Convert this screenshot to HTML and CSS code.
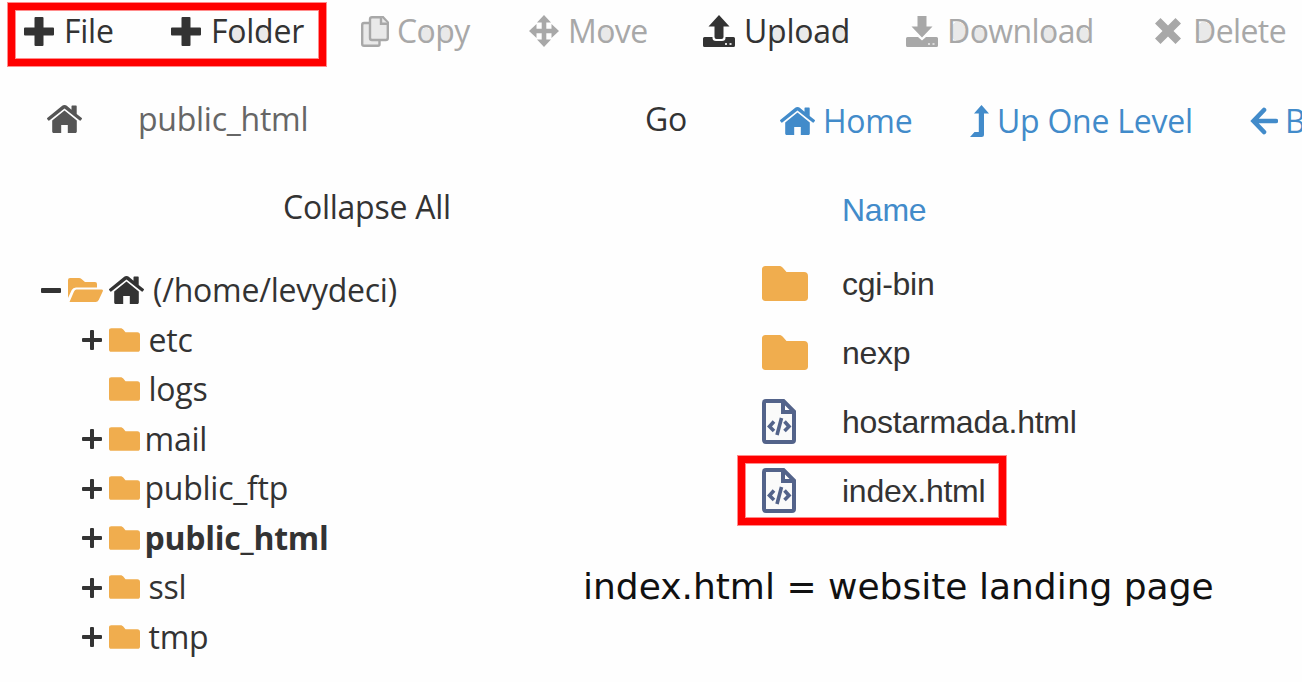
FILE: index.html
```html
<!DOCTYPE html>
<html lang="en">
<head>
<meta charset="utf-8">
<title>File Manager</title>
<link rel="stylesheet" href="styles.css">
</head>
<body>
<svg class="sprite" aria-hidden="true">
  <symbol id="house" viewBox="0 0 35 28"><path d="M17.500 0c1 0 1.700.3 2.300.8L24.500 4.700V1.200c0-.5.2-.7.7-.7H29c.5 0 .7.2.7.7v7.700l5.100 4.200c.3.3.3.6.1.9L33.600 15.500c-.3.3-.6.3-.9.1L17.500 3.500 2.300 15.600c-.3.2-.6.200-.9-.1L.1 14c-.2-.3-.2-.6.1-.9L15.200.8C15.800.3 16.500 0 17.500 0zM17.500 5.600 29.800 15.600v10.900c0 .9-.6 1.500-1.500 1.500h-7.500v-8h-6.600v8H6.700c-.9 0-1.500-.6-1.500-1.500V15.600z"/></symbol>
  <symbol id="folder" viewBox="0 0 46 35"><path d="M3.500 0H17c1.800 0 2.700.5 3.800 1.700L24.500 6H42c2.600 0 4 1.500 4 4v21.500c0 2.300-1.200 3.500-3.500 3.500h-39C1.200 35 0 33.800 0 31.500v-28C0 1.200 1.200 0 3.500 0z"/></symbol>
  <symbol id="htmlfile" viewBox="0 0 34 45"><path class="line" d="M4 2h17.500L32 12.500V41a2 2 0 0 1-2 2H4a2 2 0 0 1-2-2V4a2 2 0 0 1 2-2zM21 2v11h11"/><path class="code" d="M12 22.500 7.500 27.500 12 32M22.500 22.500 27 27.500 22.500 32M19.500 19 15 36"/></symbol>
  <symbol id="plus" viewBox="0 0 20 20"><path d="M8 1a1 1 0 0 1 1-1h2a1 1 0 0 1 1 1v7h7a1 1 0 0 1 1 1v2a1 1 0 0 1-1 1h-7v7a1 1 0 0 1-1 1H9a1 1 0 0 1-1-1v-7H1a1 1 0 0 1-1-1V9a1 1 0 0 1 1-1h7z"/></symbol>
  <symbol id="bigplus" viewBox="0 0 30 29"><path d="M10.500 1q0-1 1-1h7q1 0 1 1v9.500H29q1 0 1 1v6q0 1-1 1h-9.500V28q0 1-1 1h-7q-1 0-1-1v-9.500H1q-1 0-1-1v-6q0-1 1-1h9.500z"/></symbol>
</svg>

<nav class="toolbar">
  <div class="frame tools-frame">
    <span class="tool t-file"><svg class="i-plus"><use href="#bigplus"/></svg><span>File</span></span>
    <span class="tool"><svg class="i-plus"><use href="#bigplus"/></svg><span>F<i class="o">o</i>l<i class="d">d</i>er</span></span>
  </div>
  <span class="tool off t-copy"><svg class="i-copy" viewBox="0 0 28 31"><path class="sheet" d="M9.500 7H3Q1.200 7 1.200 9v19Q1.200 29.800 3 29.800h14q1.500 0 1.500-1.500V24"/><path class="sheet" d="M11 1.200h11l4.800 5.300v15.500q0 2-2 2H11q-2 0-2-2V3.200q0-2 2-2z"/><path class="sheet" d="M20 1.200v6.500H27"/></svg><span>C<i class="o">o</i><i class="p">p</i>y</span></span>
  <span class="tool off t-move"><svg class="i-move" viewBox="0 0 30 32"><path d="M15 0l7 7.500H17.300v6.200h5.200V9L30 16l-7.500 7V18.300h-5.200v6.200H22L15 32l-7-7.500h4.700v-6.200H7.500V23L0 16l7.500-7v4.700h5.200V7.500H8z"/></svg><span>M<i class="o">o</i>ve</span></span>
  <span class="tool t-upload"><svg class="i-load" viewBox="0 0 32 32"><path d="M16 0l10.500 11.500H20.500V22q0 2-2 2h-5q-2 0-2-2V11.500h-6zM1.500 22H9.500v1q0 3 3.500 3h6q3.500 0 3.500-3v-1h8Q32 22 32 23.500v7q0 1.500-1.500 1.500h-29Q0 32 0 30.500v-7Q0 22 1.500 22z"/><path class="dots" d="M22 28h2v2h-2zM26.500 28h2v2h-2z"/></svg><span>U<i class="p">p</i>l<i class="o">o</i><i class="a">a</i><i class="d">d</i></span></span>
  <span class="tool off t-download"><svg class="i-load" viewBox="0 0 32 32"><path d="M11.500 1h9v10.500h6L16 22.500 5.500 11.500h6zM1.500 22H12l4 3.500L20 22h10.500Q32 22 32 23.500v7q0 1.500-1.500 1.500h-29Q0 32 0 30.500v-7Q0 22 1.500 22z"/><path class="dots" d="M22 28h2v2h-2zM26.500 28h2v2h-2z"/></svg><span><i class="cap-d">D</i><i class="o">o</i>wnl<i class="o">o</i>a<i class="d">d</i></span></span>
  <span class="tool off t-delete"><svg class="i-x" viewBox="0 0 26 26"><path d="M5.500 0 13 7.500 20.500 0 26 5.500 18.500 13 26 20.500 20.500 26 13 18.500 5.500 26 0 20.500 7.500 13 0 5.500z"/></svg><span><i class="cap-d">D</i>elete</span></span>
</nav>

<div class="location">
  <svg class="i-house path-home"><use href="#house"/></svg>
  <span class="path">public_html</span>
  <span class="go">Go</span>
  <a class="link l-home"><svg class="i-house"><use href="#house"/></svg><span>Home</span></a>
  <a class="link l-up"><svg class="i-up" viewBox="0 0 19 32"><path d="M11.500 0 19 8.500H14V29.500q0 2.500-2.500 2.500H0l4.500-5H8.800V8.500H4z"/></svg><span>Up One Level</span></a>
  <a class="link l-back"><svg class="i-back" viewBox="0 0 28 28"><path d="M14 3 3.500 14 14 25M4 14h22"/></svg><span>Back</span></a>
</div>

<main class="main">
  <section class="side">
    <div class="collapse">Collapse All</div>
    <div class="tree">
      <div class="node root"><svg class="i-minus" viewBox="0 0 20 5"><rect width="20" height="5" rx="1"/></svg><svg class="i-open" viewBox="0 0 35 24"><path d="M0 20V2q0-2 2-2h9q1.500 0 2.500 1l3.500 3h10q2 0 2 2v3.500H8q-3 0-4.300 2.500zM8.500 11.500h25q2 0 1.200 2l-4 8.500q-1 2-3 2H1.500l4.500-10.500q1-2 2.500-2z"/></svg><svg class="i-house"><use href="#house"/></svg><span>(/home/levydeci)</span></div>
      <div class="node"><svg class="i-exp"><use href="#plus"/></svg><svg class="i-dir"><use href="#folder"/></svg><span>etc</span></div>
      <div class="node"><span class="i-exp"></span><svg class="i-dir"><use href="#folder"/></svg><span>logs</span></div>
      <div class="node tight"><svg class="i-exp"><use href="#plus"/></svg><svg class="i-dir"><use href="#folder"/></svg><span>mail</span></div>
      <div class="node tight"><svg class="i-exp"><use href="#plus"/></svg><svg class="i-dir"><use href="#folder"/></svg><span>public_ftp</span></div>
      <div class="node tight current"><svg class="i-exp"><use href="#plus"/></svg><svg class="i-dir"><use href="#folder"/></svg><span>public_html</span></div>
      <div class="node"><svg class="i-exp"><use href="#plus"/></svg><svg class="i-dir"><use href="#folder"/></svg><span>ssl</span></div>
      <div class="node"><svg class="i-exp"><use href="#plus"/></svg><svg class="i-dir"><use href="#folder"/></svg><span>tmp</span></div>
    </div>
  </section>
  <section class="content">
    <div class="files">
      <div class="name-head">Name</div>
      <div class="file"><span class="slot"><svg class="i-folder"><use href="#folder"/></svg></span><span class="label">cgi-bin</span></div>
      <div class="file"><span class="slot"><svg class="i-folder"><use href="#folder"/></svg></span><span class="label">nexp</span></div>
      <div class="file"><span class="slot"><svg class="i-html"><use href="#htmlfile"/></svg></span><span class="label">hostarmada.html</span></div>
      <div class="file frame picked"><span class="slot"><svg class="i-html"><use href="#htmlfile"/></svg></span><span class="label">index.html</span></div>
    </div>
    <p class="note">index.html = website landing page</p>
  </section>
</main>
</body>
</html>
```

FILE: styles.css
```css
* { box-sizing: border-box; }
body {
  margin: 0;
  width: 1302px;
  height: 682px;
  overflow: hidden;
  background: #fefefe;
  color: #333;
  font: 32px/40px "Open Sans", sans-serif;
  letter-spacing: -.25px;
  white-space: nowrap;
}
.sprite { display: none; }
svg { display: block; flex: none; fill: currentColor; }
i { font-style: normal; }

.frame { border: 7px solid #f00; box-shadow: 0 0 0 1px #ff8c8c, inset 0 0 0 1px #ff8c8c; }

.toolbar { display: flex; height: 68px; padding-top: 3px; }
.tools-frame { display: flex; width: 318px; height: 63px; margin-left: 8px; padding-left: 9px; flex: none; }
.tool { display: flex; align-items: center; height: 49px; padding-bottom: 8px; flex: none; }
.toolbar > .tool { margin-top: 7px; }
.off { color: #a8a8a8; }
.off > span { letter-spacing: -.6px; }
.t-file { width: 147px; }
.t-copy { width: 168px; margin-left: 35px; }
.t-move { width: 174px; }
.t-upload { width: 203px; }
.t-download { width: 249px; }
.i-plus { width: 30px; height: 29px; margin: 2px 10px 0 0; }
.i-copy { width: 28px; height: 31px; margin: 1px 8px 0 0; }
.i-move { width: 30px; height: 32px; margin-right: 9px; }
.i-load { width: 32px; height: 32px; margin: 1px 9px 0 0; }
.i-x { width: 26px; height: 26px; margin-right: 12px; }
.sheet { fill: #e9e9e9; stroke: #a8a8a8; stroke-width: 2.400; }
.dots { fill: #ddd; }

/* shaded bowls of the toolbar lettering */
.o { background: radial-gradient(ellipse 33% 15% at 50% 59%, #e9e9e9 98%, transparent); }
.d { background: radial-gradient(ellipse 30% 15% at 46% 59%, #e9e9e9 98%, transparent); }
.p { background: radial-gradient(ellipse 30% 15% at 54% 59%, #e9e9e9 98%, transparent); }
.a { background: radial-gradient(ellipse 26% 8% at 46% 67%, #e9e9e9 98%, transparent); }
.cap-d { background: radial-gradient(ellipse 34% 22% at 47% 52%, #e9e9e9 98%, transparent); }

.location { display: flex; align-items: center; height: 101px; padding: 1px 0 0 47px; }
.location > * { flex: none; }
.path-home { color: #555; }
.path { width: 507px; margin-left: 56px; color: #666; }
.go { width: 135px; }
.link { display: flex; align-items: center; color: #428bca; padding-top: 3px; }
.l-home { width: 190px; }
.l-home svg { margin-right: 8px; }
.l-up { width: 280px; }
.i-house { width: 35px; height: 28px; }
.i-up { width: 19px; height: 32px; margin-right: 8px; }
.i-back { width: 28px; height: 28px; margin-right: 7px; fill: none; stroke: currentColor; stroke-width: 4.600; stroke-linecap: round; }

.main { display: grid; grid-template-columns: 583px 1fr; }
.collapse { height: 96px; padding: 18px 0 0 283px; }
.node { display: flex; align-items: center; height: 49.500px; padding-left: 81.500px; }
.root { padding-left: 41px; }
.node > span:last-child { margin: 1px 0 0 9px; }
.node.tight > span:last-child { margin-left: 5px; }
.current { font-weight: 700; }
.i-minus { width: 20px; height: 5px; margin: 2px 7px 0 0; }
.i-open { width: 35px; height: 24px; margin-right: 6px; color: #f0ad4e; }
.i-exp { width: 20px; height: 20px; margin: 2px 7px 0 0; }
.i-dir { width: 31px; height: 24px; margin-top: 1px; color: #f0ad4e; }

.files { padding-left: 155px; font-family: "Liberation Sans", Arial, sans-serif; }
.name-head { height: 79.500px; padding: 21px 0 0 104px; color: #428bca; }
.file { display: flex; align-items: center; height: 69px; padding-left: 24px; }
.slot { width: 80px; }
.label { margin-top: 2px; }
.i-folder { width: 46px; height: 35px; color: #f0ad4e; }
.i-html { width: 34px; height: 45px; }
.line { fill: #fafafa; stroke: #53638a; stroke-width: 4; }
.code { fill: none; stroke: #53638a; stroke-width: 3.600; }
.picked { width: 268px; padding-left: 17px; }
.note { margin: 42px 0 0; color: #111; font: 36px/40px "DejaVu Sans", Verdana, sans-serif; letter-spacing: 0; }
```
